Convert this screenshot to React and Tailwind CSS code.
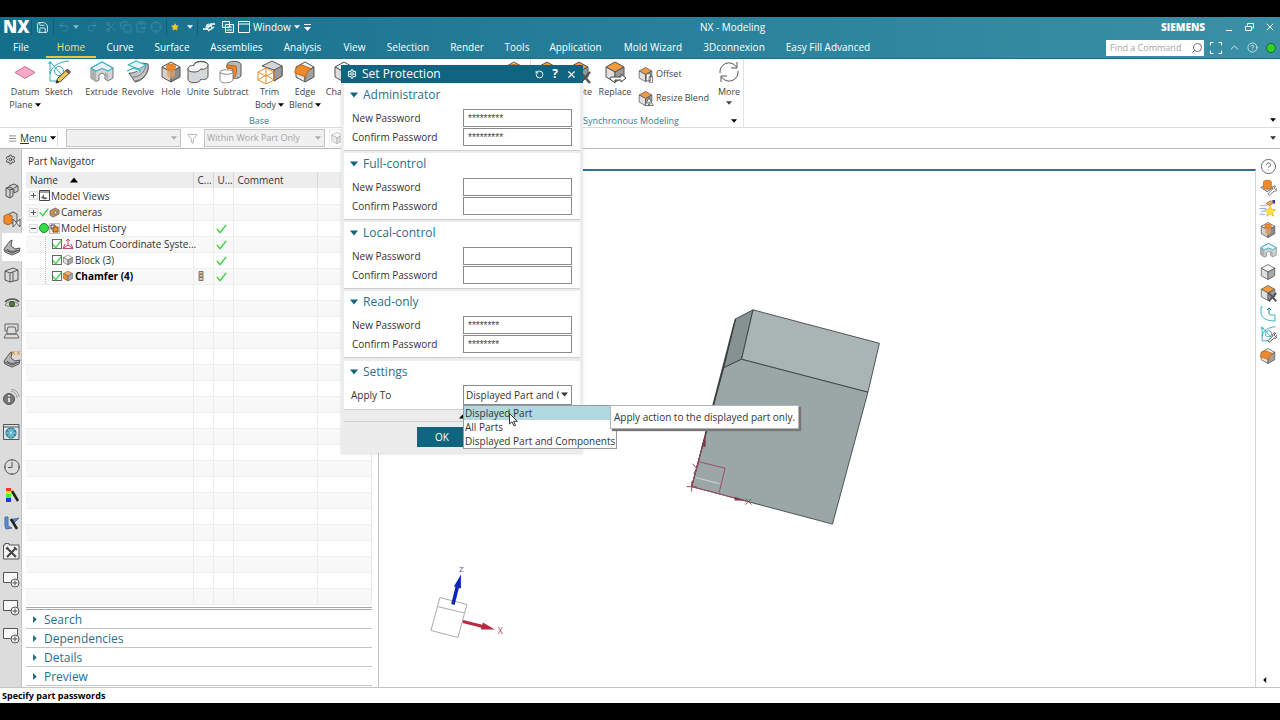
import { useState } from 'react';
import {
  Save, Undo2, Redo2, Scissors, Copy, ClipboardPaste, Crosshair, Star, Search,
  ChevronUp, CircleHelp, Settings, RotateCcw, X, Maximize, Menu, Clock, Filter
} from 'lucide-react';

const ORANGE = '#ee8a2b';

/* ---------- small shapes ---------- */

function Caret({ className = 'text-black', dir = 'down', size = 6 }) {
  const points = {
    down: '0,2 10,2 5,8',
    up: '0,8 10,8 5,2',
    right: '3,0 8,5 3,10',
    left: '7,0 2,5 7,10'
  };
  return (
    <svg width={size} height={size} viewBox="0 0 10 10" className={`shrink-0 ${className}`}>
      <polygon points={points[dir]} fill="currentColor" />
    </svg>
  );
}

function Cube({ size = 22, top = '#f4f4f4', left = '#dedede', right = '#a9a9a9', children }) {
  return (
    <svg width={size} height={size} viewBox="0 0 24 24" className="shrink-0" strokeLinejoin="round">
      <g stroke="#555" strokeWidth="1">
        <polygon points="12,2 21,7 12,12 3,7" fill={top} />
        <polygon points="3,7 12,12 12,22 3,17" fill={left} />
        <polygon points="21,7 12,12 12,22 21,17" fill={right} />
      </g>
      {children}
    </svg>
  );
}

function Check({ size = 11 }) {
  return (
    <svg width={size} height={size} viewBox="0 0 12 12" className="shrink-0">
      <path d="M1 6.5 4.5 10.5 11 2" fill="none" stroke="#35d43c" strokeWidth="1.5" />
    </svg>
  );
}

/* ---------- ribbon icons ---------- */

function DatumPlane() {
  return (
    <svg width="22" height="22" viewBox="0 0 24 24">
      <polygon points="12,6 23,12.500 12,19 1,12.500" fill="#f6a9c8" stroke="#c9668f" />
    </svg>
  );
}

function Pencil() {
  return (
    <g>
      <path d="M9 23 10.500 18.500 19 10.500 22 13.500 13.500 21.500Z" fill="#f2c94b" stroke="#444" />
      <path d="M19 10.500 20.500 9 23.500 12 22 13.500Z" fill="#b04a5a" stroke="#444" />
      <path d="M9 23 10 20 12 22Z" fill="#222" />
    </g>
  );
}

function Sketch() {
  return (
    <svg width="24" height="24" viewBox="0 0 24 24" fill="none">
      <path d="M3 1V21H11M1 3H5M3 14C5 6 11 2 22 1M3 2 16 16" stroke="#2fa9bd" />
      <circle cx="12" cy="11" r="4.500" stroke="#2fa9bd" />
      <Pencil />
    </svg>
  );
}

function Extrude({ size = 24 }) {
  return (
    <svg width={size} height={size} viewBox="0 0 24 24" strokeLinejoin="round">
      <path d="M1 8 12 2 23 8V18L18 21 15 19V15L12 13 9 15V20L6 21.500 1 18Z" fill="#d2d5d6" stroke="#777" />
      <path d="M15 12 18 14V21L15 19ZM1 8 6 11V21.500L1 18Z" fill="#adb1b2" />
      <path d="M1 8 12 2 23 8 18 11 12 8.500 6 11Z" fill="#eef4f5" stroke="#35b3c6" strokeWidth="1.300" />
    </svg>
  );
}

function Revolve() {
  return (
    <svg width="24" height="24" viewBox="0 0 24 24" strokeLinejoin="round">
      <path d="M3 13C9 14 15 9 16 3L22 4C24 12 17 21 9 22Z" fill="#c3c6c7" stroke="#555" />
      <path d="M7 17C14 17 19 12 20 5M9 21C16 20 21 15 22 8" fill="none" stroke="#777" />
      <path d="M2 5 10 1 20 5 13 9ZM1 11 8 8 15 11" fill="#eaf7f9" stroke="#35b3c6" strokeWidth="1.200" />
    </svg>
  );
}

function Hole({ size = 24 }) {
  return (
    <Cube size={size} left="#d8cfc6" right="#8d8a88">
      <path d="M8 8V16L12 19 16 16V8Z" fill="#d9a36f" opacity=".8" />
      <ellipse cx="12" cy="7" rx="4.500" ry="3" fill={ORANGE} stroke="#b9651a" strokeWidth=".7" />
    </Cube>
  );
}

function Unite() {
  return (
    <svg width="24" height="24" viewBox="0 0 24 24" fill="#d6d7d8" stroke="#555">
      <path d="M8 5C8 0 22 0 22 5V16C22 20 16 20 15 19 14 24 2 24 2 19V9C2 6 6 6 8 6Z" />
      <path d="M2 9C2 13 14 13 14.500 9 18 10 22 8 22 5 22 1 8 0 8 5.500 4 5 2 7 2 9Z" fill="#f5f5f5" />
    </svg>
  );
}

function Subtract() {
  return (
    <svg width="24" height="24" viewBox="0 0 24 24" stroke="#555">
      <path d="M8 5C8 0 22 0 22 5V15C22 18 17 19 14 18V9L8 8Z" fill="#b9bbbc" />
      <path d="M8 5 8 8 14 9V18C18 17 18 8 17 6Z" fill={ORANGE} stroke="#b9651a" />
      <path d="M1 12V20C1 24 14 24 14 19V12C14 9 1 9 1 12ZM1 12C1 15 14 15 14 12" fill="#fff" stroke="#888" />
    </svg>
  );
}

function TrimBody() {
  return (
    <svg width="26" height="24" viewBox="0 0 26 24" strokeLinejoin="round">
      <path d="M5 6 15 1 25 6V16L17 21V10Z" fill="#d4d4d4" stroke="#555" />
      <path d="M25 6 17 10V21L25 16Z" fill="#9c9c9c" stroke="#555" />
      <path d="M1 12 9 8 17 12V20L9 24 1 20ZM1 12 9 16 17 12M9 16V24M9 8V15L1 20M9 15 17 20" fill="none" stroke={ORANGE} />
    </svg>
  );
}

function EdgeBlend({ size = 24 }) {
  return (
    <Cube size={size} left="#e6e6e6" right="#a0a0a0">
      <path d="M2 11C3 7 6 5 9 5L19 9C15 10 13 13 13 17L2 13Z" fill={ORANGE} stroke="#b9651a" />
    </Cube>
  );
}

function MoveCube({ mark, size = 24 }) {
  return (
    <Cube size={size} top="#f39a3d" left="#e0e0e0" right="#9a9a9a">
      {mark === 'swap' && <path d="M8 17H18V14L23 18 18 22V20H12V23L7 19Z" fill="#fff" stroke="#444" />}
      {mark === 'delete' && <path d="M13 12 23 23M23 12 13 23" stroke="#555" strokeWidth="2.500" />}
      {mark === 'offset' && <path d="M13 11H19V21H13ZM17 15H22V23H17Z" fill="#fff" stroke="#444" />}
      {mark === 'resize' && <path d="M17 11 23 22H11ZM15 18H19L17 22Z" fill="#f4f4f4" stroke="#444" />}
    </Cube>
  );
}

function MoreIcon() {
  return (
    <svg width="22" height="22" viewBox="0 0 22 22" fill="none" stroke="#555">
      <path d="M2 12A9 9 0 0 1 18.500 6M19 1V7H13M20 10A9 9 0 0 1 3.500 16M3 21V15H9" />
    </svg>
  );
}

/* ---------- header ---------- */

const tabs = [
  ['File', 'w-[46px] pr-1'],
  ['Home', 'w-[50px]'],
  ['Curve', 'w-12'],
  ['Surface', 'w-14'],
  ['Assemblies', 'w-[73px]'],
  ['Analysis', 'w-[59px]'],
  ['View', 'w-[45px]'],
  ['Selection', 'w-[62px]'],
  ['Render', 'w-14'],
  ['Tools', 'w-11'],
  ['Application', 'w-[73px]'],
  ['Mold Wizard', 'w-[82px]'],
  ['3Dconnexion', 'w-20'],
  ['Easy Fill Advanced', 'w-[108px]']
];

function Divider() {
  return <span className="h-4 w-px bg-[#0f5f78]" />;
}

function Header() {
  return (
    <header className="bg-linear-to-r from-[#146f8a] via-[#27809a] to-[#3a90a5] text-white border-b border-[#1a6e86]">
      <div className="flex h-5 items-center">
        <div className="flex w-[700px] shrink-0 items-center gap-1 pl-[3px]">
          <span className="w-6 text-[17px] leading-5 font-extrabold">NX</span>
          <Divider />
          <Save size={13} strokeWidth={1.5} />
          <Divider />
          <span className="flex items-center gap-[3px] text-[#3b88a0]">
            <Undo2 size={12} />
            <Caret className="text-[#8dbccb]" />
            <Redo2 size={12} className="mx-1" />
            <Scissors size={12} />
            <Copy size={12} />
            <ClipboardPaste size={12} />
            <Crosshair size={12} />
          </span>
          <Divider />
          <Star size={8} fill="#f5c32c" stroke="#f5c32c" className="mr-1" />
          <Caret className="text-white" />
          <Divider />
          <svg width="14" height="12" viewBox="0 0 14 12" fill="none" stroke="#fff" className="mr-0.5">
            <path d="M1 8H5L9 3H13M4 5H9M6 10 12 6" strokeWidth="1.300" />
            <circle cx="7" cy="6" r="3" />
          </svg>
          <svg width="12" height="12" viewBox="0 0 12 12" fill="#2a7f98" stroke="#fff">
            <path d="M.5.5H7.500V6.500H.5ZM3.500 3.500H11.500V11.500H3.500ZM5 6H10M5 9H10" />
          </svg>
          <button type="button" className="flex items-center gap-[3px] text-[10px]">
            <svg width="12" height="12" viewBox="0 0 12 12" fill="none" stroke="#fff">
              <path d="M.5.5H11.500V11.500H.5ZM.5 3H11.500" />
            </svg>
            Window
            <Caret className="text-white" />
          </button>
          <svg width="7" height="7" viewBox="0 0 7 7" fill="#fff">
            <path d="M0 0H7V1H0ZM0 3H7L3.500 7Z" />
          </svg>
        </div>
        <h1 className="text-[10px]">NX - Modeling</h1>
        <div className="ml-auto flex items-center gap-2.5 pr-1">
          <span className="mr-2 text-[10px] font-extrabold">SIEMENS</span>
          <button type="button" aria-label="Minimize" className="flex size-3 items-end justify-center">
            <span className="mb-0.5 h-px w-1.5 bg-white" />
          </button>
          <button type="button" aria-label="Restore">
            <svg width="9" height="8" viewBox="0 0 9 8" fill="none" stroke="#fff">
              <path d="M2.500 3V.5H8.500V5H6.500M.5 3.500H6.500V7.500H.5Z" />
            </svg>
          </button>
          <button type="button" aria-label="Close"><X size={12} /></button>
        </div>
      </div>

      <div className="flex h-[21px] items-center">
        <nav className="flex h-[21px]">
          {tabs.map(([name, width]) => (
            <a
              key={name}
              href="#"
              className={`${width} flex items-center justify-center whitespace-nowrap border-b-2 pt-0.5 text-[10px] ${name === 'Home' ? 'border-[#e9c63f] text-[#f0df7a]' : 'border-transparent'}`}
            >
              {name}
            </a>
          ))}
        </nav>
        <div className="ml-auto flex items-center gap-1.5 pr-0.5">
          <div className="flex h-4 w-[98px] items-center bg-white pl-1 pr-px">
            <input
              type="text"
              aria-label="Find a Command"
              placeholder="Find a Command"
              className="w-0 flex-1 text-[9px] text-black outline-none placeholder:text-[#a5a5a5]"
            />
            <Search size={12} strokeWidth={1.5} stroke="#444" className="-scale-x-100" />
          </div>
          <svg width="12" height="12" viewBox="0 0 12 12" fill="none" stroke="#fff">
            <path d="M.5 3.500V.5H3.500M8.500.5H11.500V3.500M11.500 8.500V11.500H8.500M3.500 11.500H.5V8.500" />
          </svg>
          <ChevronUp size={13} strokeWidth={1.5} />
          <CircleHelp size={11} strokeWidth={1.5} />
          <span className="mx-0.5 size-[10px] rounded-full border border-[#1c6b2a] bg-[#2fd12a]" />
        </div>
      </div>
    </header>
  );
}

/* ---------- ribbon ---------- */

const baseTools = [
  { label: 'Datum', second: 'Plane', icon: <DatumPlane />, width: 'w-9' },
  { label: 'Sketch', icon: <Sketch />, width: 'w-8 mr-2' },
  { label: 'Extrude', icon: <Extrude />, width: 'w-[37px]' },
  { label: 'Revolve', icon: <Revolve />, width: 'w-9' },
  { label: 'Hole', icon: <Hole />, width: 'w-[30px]' },
  { label: 'Unite', icon: <Unite />, width: 'w-6' },
  { label: 'Subtract', icon: <Subtract />, width: 'w-[42px]' },
  { label: 'Trim', second: 'Body', icon: <TrimBody />, width: 'w-[35px]' },
  { label: 'Edge', second: 'Blend', icon: <EdgeBlend />, width: 'w-9' },
  { label: 'Chamfer', icon: <Cube size={24} />, width: 'w-[42px]' }
];

function RibbonButton({ label, second, icon, width }) {
  return (
    <button type="button" className={`${width} flex shrink-0 flex-col items-center text-[9px] leading-[13px]`}>
      <span className="mb-px flex h-6 items-center">{icon}</span>
      <span className="whitespace-nowrap">{label}</span>
      {second && (
        <span className="flex items-center gap-0.5">
          {second}
          <Caret size={6} />
        </span>
      )}
    </button>
  );
}

function Ribbon() {
  return (
    <div className="flex h-[69px] border-b border-[#dcdcdc] text-[#444]">
      <div className="flex w-[531px] shrink-0 flex-col border-r border-[#e2e2e2]">
        <div className="flex flex-1 items-start pl-[7px] pt-px">
          {baseTools.map((t) => <RibbonButton key={t.label} {...t} />)}
          <span className="ml-auto mr-1"><Hole /></span>
        </div>
        <div className="pr-3 text-center text-[9px] leading-[13px] text-[#2c7f95]">Base</div>
      </div>
      <div className="flex w-[213px] shrink-0 flex-col border-r border-[#e2e2e2]">
        <div className="flex flex-1 items-start pt-px">
          <span className="ml-1"><MoveCube /></span>
          <RibbonButton label="Delete" icon={<MoveCube mark="delete" />} width="w-[37px] ml-px" />
          <RibbonButton label="Replace" icon={<MoveCube mark="swap" />} width="w-9" />
          <div className="ml-1 flex w-[74px] flex-col gap-2 pt-1.5 text-[9px]">
            <button type="button" className="flex h-4 items-center gap-0.5 whitespace-nowrap">
              <MoveCube size={17} mark="offset" />Offset
            </button>
            <button type="button" className="flex h-4 items-center gap-0.5 whitespace-nowrap">
              <MoveCube size={17} mark="resize" />Resize Blend
            </button>
          </div>
          <button type="button" className="ml-1 flex w-7 flex-col items-center text-[9px] leading-[13px]">
            <span className="mb-px flex h-6 items-center"><MoreIcon /></span>
            More
            <Caret size={6} className="mt-0.5" />
          </button>
        </div>
        <div className="flex items-center text-[9px] leading-[13px] text-[#2c7f95]">
          <span className="flex-1 whitespace-nowrap text-center">Synchronous Modeling</span>
          <Caret size={6} className="mr-1.5 text-black" />
        </div>
      </div>
      <div className="flex flex-1 items-end justify-end pb-1 pr-1"><Caret size={6} /></div>
    </div>
  );
}

function SelectionBar() {
  return (
    <div className="flex h-[21px] items-center border-b border-[#b9b9b9] text-[10px] text-[#333]">
      <button type="button" className="flex h-4 w-[58px] items-center gap-[3px] border-r border-[#ddd] pl-2">
        <Menu size={9} strokeWidth={1.5} />
        <span><u>M</u>enu</span>
        <Caret size={6} />
      </button>
      <div className="relative ml-2">
        <select aria-label="Type filter" disabled className="block h-[18px] w-[115px] appearance-none border border-[#c4c4c4] bg-[#f0f0f0]" />
        <Caret className="absolute right-1 top-1.5 text-[#aaa]" />
      </div>
      <Filter size={11} stroke="#aaa" className="mx-1.5" />
      <div className="relative">
        <select aria-label="Selection scope" disabled className="block h-[18px] w-[121px] appearance-none border border-[#c4c4c4] bg-[#f0f0f0] pl-0.5 text-[9px] text-[#a5a5a5]">
          <option>Within Work Part Only</option>
        </select>
        <Caret className="absolute right-1 top-1.5 text-[#aaa]" />
      </div>
      <span className="ml-1 flex h-[18px] w-6 items-center border border-[#ddd] opacity-50">
        <Cube size={14} left="#ddd" right="#bbb" top="#eee" />
      </span>
      <Caret size={6} className="ml-auto mr-1" />
    </div>
  );
}

/* ---------- left resource bar ---------- */

function Gem({ active }) {
  return (
    <svg width="18" height="18" viewBox="0 0 18 18" strokeLinejoin="round">
      <path d="M1 11 7 3 9 2 8 8 12 11 17 10 16 14 9 17 2 14Z" fill="#b5b5b5" stroke="#555" />
      <path d="M4 11C6 14 12 14 14 12M2 12 9 15 16 12" fill="none" stroke="#555" />
      {!active && <path d="M9 1 12 5M12 1 9 5M14 1 17 5M17 1 14 5" stroke={ORANGE} />}
    </svg>
  );
}

function AddWindow() {
  return (
    <svg width="17" height="17" viewBox="0 0 17 17" fill="#f8f8f8" stroke="#555">
      <path d="M.5 1.500H14.500V11.500H.5Z" />
      <circle cx="12" cy="12" r="4" />
      <path d="M12 9.500V14.500M9.500 12H14.500" />
    </svg>
  );
}

const railIcons = [
  <svg key="assembly" width="16" height="16" viewBox="0 0 16 16" stroke="#555" fill="#d0d0d0" strokeLinejoin="round">
    <path d="M5 3 10 1 14 3V8L10 10V6L5 5Z" />
    <path d="M2 5 6 4 9 6V13L6 15 2 13ZM2 5 6 7 9 6M6 7V15" />
    <path d="M10 5 14 3" />
  </svg>,
  <svg key="constraint" width="18" height="17" viewBox="0 0 18 17" stroke="#555" strokeLinejoin="round">
    <path d="M6 3 10 1 14 3V10L9 12Z" fill="#cfcfcf" />
    <path d="M1 5 5 3 9 5V12L5 14 1 12Z" fill={ORANGE} stroke="#b9651a" />
    <path d="M10 8V16L17 8V16Z" fill="#fff" />
  </svg>,
  <Gem key="part" active />,
  <svg key="reuse" width="15" height="16" viewBox="0 0 15 16" stroke="#555" fill="#d8d8d8" strokeLinejoin="round">
    <path d="M1 4 9 1 14 3V13L6 15 1 13ZM1 4 6 6 14 3M6 6V15M9 5V14" />
  </svg>,
  <svg key="view" width="16" height="12" viewBox="0 0 16 12">
    <path d="M1 8C3 4 12 3 15 8 12 10 5 10 1 8Z" fill="#ddd" stroke="#777" />
    <circle cx="8" cy="7" r="2.500" fill="#4a8f2a" stroke="#333" />
    <path d="M1 5C5 1 12 1 15 5" fill="none" stroke="#555" strokeWidth="1.500" />
  </svg>,
  <svg key="machine" width="17" height="16" viewBox="0 0 17 16" stroke="#666" fill="none">
    <path d="M2 1H15V8H13L12 4H5L4 8H2ZM4 8V11H13V8M1 15 3 11H14L16 15Z" />
  </svg>,
  <Gem key="process" />,
  <svg key="info" width="17" height="17" viewBox="0 0 17 17">
    <circle cx="6" cy="10" r="5.500" fill="#777" stroke="#555" />
    <path d="M6 6V7.500M6 9V13" stroke="#fff" strokeWidth="1.500" />
    <path d="M8 2C12 3 14 6 14 9M8 0C14 1 16 5 16 8" fill="none" stroke="#999" />
  </svg>,
  <svg key="web" width="17" height="16" viewBox="0 0 17 16">
    <path d="M.5.5H16V15.500H.5ZM.5 3H16" fill="#d9e3e8" stroke="#555" />
    <circle cx="8" cy="9" r="5" fill="#3a9bb5" stroke="#216c84" />
    <path d="M8 4V14M3 9H13M5 5 11 13M11 5 5 13" stroke="#bfe6ef" strokeWidth=".7" />
  </svg>,
  <svg key="history" width="16" height="16" viewBox="0 0 16 16" fill="none" stroke="#555">
    <circle cx="8" cy="8" r="7.300" />
    <path d="M8 3V8.500H4M8 .5V2M8 14V15.500M14 8H15.500M.5 8H2" />
  </svg>,
  <svg key="color" width="16" height="16" viewBox="0 0 16 16">
    <path d="M2 1H7V4H2Z" fill="#f33" />
    <path d="M2 4H7V7H2Z" fill="#fd2" />
    <path d="M2 7H7V11H2Z" fill="#4e4" />
    <path d="M2 11H7V15H2Z" fill="#23e" />
    <path d="M8 4 14 14" stroke="#222" strokeWidth="2.500" />
  </svg>,
  <svg key="render" width="16" height="16" viewBox="0 0 16 16">
    <path d="M1 2H4V11L8 13 2 14 1 11ZM6 5 15 3 10 8Z" fill="#5a8fd0" stroke="#3f6fae" />
    <path d="M7 4 13 14" stroke="#222" strokeWidth="2.500" />
  </svg>,
  <svg key="tools" width="17" height="17" viewBox="0 0 17 17" fill="#f4f4f4" stroke="#555">
    <path d="M.5 2H2V.5H6V2H16V16H.5Z" />
    <path d="M4 5 13 14M13 5 4 14" stroke="#444" strokeWidth="2" />
    <path d="M3 6 5 4M11 4 14 7" stroke="#444" strokeWidth="1.500" />
  </svg>,
  <AddWindow key="w1" />,
  <AddWindow key="w2" />,
  <AddWindow key="w3" />
];

const railGap = { 7: 'mt-2.5', 8: 'mt-[7px]', 9: 'mt-[7px]' };

function LeftRail() {
  return (
    <aside className="flex w-[22px] shrink-0 flex-col border-r border-[#c2c2c2] bg-[#dcdcdc]">
      <div className="mb-2 flex h-5 items-center justify-center">
        <Settings size={11} stroke="#333" />
      </div>
      {railIcons.map((icon, i) => (
        <div
          key={icon.key}
          className={`flex h-7 shrink-0 items-center justify-center ${railGap[i] || ''} ${i === 2 ? '-mr-px ml-0.5 bg-white' : 'pl-0.5'}`}
        >
          {icon}
        </div>
      ))}
    </aside>
  );
}

/* ---------- part navigator ---------- */

function Expander({ open }) {
  return (
    <button type="button" aria-label={open ? 'Collapse' : 'Expand'} className="mr-px flex size-[9px] shrink-0 items-center justify-center border border-[#ddd] bg-[#f7f7f7]">
      <svg width="7" height="7" viewBox="0 0 7 7" stroke="#555">
        <path d={open ? 'M1 3.500H6' : 'M1 3.500H6M3.500 1V6'} />
      </svg>
    </button>
  );
}

function TreeCheck({ name }) {
  return (
    <span className="relative size-[10px] shrink-0">
      <input type="checkbox" defaultChecked aria-label={name} className="block size-[10px] appearance-none border border-[#666] bg-white" />
      <span className="pointer-events-none absolute inset-0"><Check size={10} /></span>
    </span>
  );
}

const nodes = [
  {
    name: 'Model Views', open: false, icon: (
      <svg width="11" height="11" viewBox="0 0 11 11" className="shrink-0">
        <path d="M.5.5H10.500V10.500H.5ZM.5 2H10.500" fill="#fff" stroke="#444" />
        <path d="M2 8 5 4V7L9 8 6 9.500Z" fill="#666" />
      </svg>
    )
  },
  {
    name: 'Cameras', open: false, lead: <Check size={10} />, icon: (
      <svg width="11" height="11" viewBox="0 0 11 11" className="shrink-0">
        <path d="M1 4 6 1 10 3V7L4 10 1 8Z" fill="#d88a4a" stroke="#777" />
        <circle cx="6.500" cy="5.500" r="1.500" fill="#eee" stroke="#666" />
      </svg>
    )
  },
  {
    name: 'Model History', open: true, used: true,
    lead: <span className="size-[10px] shrink-0 rounded-full border border-[#1d8a2a] bg-[#34dd48]" />,
    icon: (
      <svg width="11" height="11" viewBox="0 0 11 11" className="shrink-0">
        <path d="M.5.5H10.500V10.500H.5Z" fill="#eee" stroke="#bbb" />
        <path d="M2 2H6V6H2Z" fill="none" stroke="#444" />
        <path d="M4 4H9V9H4Z" fill={ORANGE} stroke="#8a4a18" />
      </svg>
    )
  },
  {
    name: 'Datum Coordinate Syste...', child: true, used: true, icon: (
      <svg width="12" height="12" viewBox="0 0 12 12" fill="none" stroke="#c2476f" className="shrink-0">
        <path d="M6 7V1M6 7 1 10.500M6 7 11 10.500M4 3 6 1 8 3M3 6 1 10.500H11L9 6" />
      </svg>
    )
  },
  { name: 'Block (3)', child: true, used: true, icon: <Cube size={12} /> },
  { name: 'Chamfer (4)', child: true, used: true, bold: true, marked: true, icon: <Cube size={12} left={ORANGE} top="#f4b272" /> }
];

function PartNavigator() {
  const rows = [...nodes, ...Array(20).fill(null)];
  const cell = 'border-r border-[#ececec]';

  return (
    <section className="flex w-[357px] shrink-0 flex-col border-r border-[#c0c0c0] pl-1 pr-1.5 pt-1 text-[#333]">
      <h2 className="h-[19px] pl-0.5 text-[10px] leading-4">Part Navigator</h2>
      <div className="border-b-[3px] border-double border-[#a8a8a8] pb-0.5">
        <table className="w-full table-fixed border-collapse text-left text-[10px] leading-3">
          <colgroup>
            <col className="w-[167px]" />
            <col className="w-5" />
            <col className="w-5" />
            <col className="w-[84px]" />
            <col />
          </colgroup>
          <thead>
            <tr className="h-4 bg-[#ededed]">
              <th className="border-r border-[#d6d6d6] py-0 pl-1 font-normal">
                <span className="flex items-center gap-3">Name <Caret dir="up" size={8} /></span>
              </th>
              <th className="border-r border-[#d6d6d6] p-0 pl-1 font-normal">C...</th>
              <th className="border-r border-[#d6d6d6] p-0 pl-1 font-normal">U...</th>
              <th className="border-r border-[#d6d6d6] p-0 pl-1 font-normal">Comment</th>
              <th className="p-0" />
            </tr>
          </thead>
          <tbody>
            {rows.map((n, i) => (
              <tr key={i} className={`h-4 border-b border-[#efefef] ${i % 2 ? 'bg-[#f8f8f8]' : 'bg-white'}`}>
                <td className={`${cell} p-0 pl-[3px]`}>
                  {n && (
                    <div className={`flex h-[15px] items-center whitespace-nowrap ${n.bold ? 'font-bold text-black' : ''}`}>
                      {n.child ? (
                        <>
                          <span className="ml-4 h-full w-[7px] shrink-0 border-l border-dotted border-[#bbb]" />
                          <TreeCheck name={n.name} />
                        </>
                      ) : <Expander open={n.open} />}
                      {n.lead}
                      {n.icon}
                      <span className="pl-px">{n.name}</span>
                    </div>
                  )}
                </td>
                <td className={`${cell} p-0`}>
                  {n?.marked && (
                    <svg width="7" height="10" viewBox="0 0 7 10" className="ml-1" fill="#f0c39a" stroke="#777">
                      <path d="M1 .5H5V3H1ZM1 3.500H5V6H1ZM1 6.500H5V9.500H1Z" />
                    </svg>
                  )}
                </td>
                <td className={`${cell} p-0 pl-0.5`}>{n?.used && <Check />}</td>
                <td className={`${cell} p-0`} />
                <td className={`${cell} p-0`} />
              </tr>
            ))}
          </tbody>
        </table>
      </div>
      {['Search', 'Dependencies', 'Details', 'Preview'].map((name) => (
        <button key={name} type="button" className="flex h-[19px] items-center gap-1.5 border-b border-[#c4c4c4] pl-[5px] pt-0.5 text-left text-[12px] text-[#1f7189]">
          <Caret dir="right" size={7} className="text-[#14647d]" />
          {name}
        </button>
      ))}
    </section>
  );
}

/* ---------- graphics window ---------- */

function Viewport() {
  return (
    <div className="flex min-w-0 flex-1 flex-col pt-5">
      <div className="flex-1 border-r border-t-2 border-r-[#d5d5d5] border-t-[#2b7587]">
        <svg className="h-[516px] w-full" viewBox="379 170 877 516" preserveAspectRatio="xMinYMin meet">
          <g stroke="#2f3636" strokeWidth=".8" strokeLinejoin="round">
            <polygon points="736,318 753.500,309 742,358.500 724,367" fill="#869292" />
            <polygon points="753.500,309 880,342.500 868.500,391.500 742,358.500" fill="#a9b5b5" />
            <polygon points="724,367 742,358.500 868.500,391.500 833,523.500 692,486" fill="#9ba7a7" />
            <polygon points="736,318 724,367 692,486 734,324" fill="#4b5353" />
          </g>
          <g fill="none" stroke="#a14b5e" strokeWidth="1">
            <path d="M687 486H697M692 481V491M692 486 749 501M692 486 706 434M699 461 725.500 467.500 719.500 492" />
            <path d="M746 498 752 504M752 498 746 504M693 463 697 468 699 463M697 468 694 473" />
            <path d="M696 477 720 483" stroke="#d0d8d8" />
          </g>
          <path d="M702 446 706 432 706 446ZM735 496 746 500 735 500Z" fill="#7c3a4a" />
          <g fill="none" stroke="#aaa">
            <path d="M440 597 467 604 458 637 431 630ZM437.500 606 464.500 612.500" />
          </g>
          <path d="M453 604 458 584" stroke="#1226b8" strokeWidth="3.500" />
          <polygon points="461,574 454,586 461,588" fill="#1226b8" />
          <path d="M463 621 483 626" stroke="#b82a40" strokeWidth="3" />
          <polygon points="495,629 483,622 481,629" fill="#b82a40" />
          <text x="459" y="571" fontSize="8" fill="#4a58c8">Z</text>
          <text x="498" y="634" fontSize="9" fill="#b84a5c">X</text>
        </svg>
      </div>
    </div>
  );
}

function Wrench() {
  return <path d="M11 21 18 14C17 11 20 9 22 10L20 13 22 15 24 13C25 16 22 18 20 17L13 23Z" fill="#fff" stroke="#444" />;
}

function RightRail() {
  const icons = [
    <CircleHelp key="help" size={17} strokeWidth={1.2} stroke="#555" />,
    <svg key="feature" width="17" height="17" viewBox="0 0 24 24">
      <path d="M1 12 10 8 19 12 10 18Z" fill="#ccc" stroke="#555" />
      <path d="M5 4V12C5 15 16 15 16 12V4C16 1 5 1 5 4Z" fill={ORANGE} stroke="#b9651a" />
      <Wrench />
    </svg>,
    <svg key="favorite" width="18" height="17" viewBox="0 0 24 24">
      <path d="M1 8H11M0 12H9M2 16H9M0 20H8" stroke="#8fb4e8" strokeWidth="1.500" />
      <path d="M9 5 16 1 20 4 14 8Z" fill="#e8a36b" stroke="#a86a3a" />
      <path d="M18 0H22V5H19Z" fill="#3a3a9a" />
      <path d="M15 8 17 13 23 13.500 18.500 17 20 23 15 19.500 10 23 11.500 17 7 13.500 13 13Z" fill="#ffe23a" stroke="#e0b51f" />
    </svg>,
    <Hole key="hole" size={18} />,
    <Extrude key="extrude" size={17} />,
    <Cube key="block" size={18} />,
    <MoveCube key="delete" mark="delete" size={18} />,
    <svg key="curve" width="16" height="16" viewBox="0 0 16 16" fill="none" stroke="#3ab8c6">
      <path d="M1 1V6C1 11 5 15 15 15V9H9M1 1H3" />
      <path d="M9 8V2M7 4 9 2 11 4" stroke="#2b8090" />
    </svg>,
    <svg key="sketch" width="17" height="17" viewBox="0 0 24 24" fill="none" stroke="#2fa9bd" strokeWidth="1.300">
      <path d="M3 1V21H11M1 3H5M3 14C5 6 11 2 22 1M3 2 16 16" />
      <circle cx="12" cy="11" r="4.500" />
      <Wrench />
    </svg>,
    <EdgeBlend key="blend" size={18} />
  ];
  return (
    <aside className="flex w-6 shrink-0 flex-col items-center pt-[7px]">
      {icons.map((icon) => (
        <div key={icon.key} className="flex h-[21px] w-full items-center justify-center">{icon}</div>
      ))}
      <Caret dir="left" size={6} className="mb-1 mr-1.5 mt-auto" />
    </aside>
  );
}

/* ---------- dialog ---------- */

const levels = [
  { name: 'Administrator', value: '*********' },
  { name: 'Full-control', value: '' },
  { name: 'Local-control', value: '' },
  { name: 'Read-only', value: '********' }
];

const applyOptions = ['Displayed Part', 'All Parts', 'Displayed Part and Components'];

function SectionTitle({ children }) {
  return (
    <h3 className="flex h-[22px] items-center gap-[5px] pl-1.5 text-[12px] text-[#1f7189]">
      <Caret size={8} className="text-[#14647d]" />
      {children}
    </h3>
  );
}

function PasswordRow({ id, label, value }) {
  return (
    <div className="flex h-[18px] items-center justify-between">
      <label htmlFor={id}>{label}</label>
      <input
        id={id}
        type="text"
        defaultValue={value}
        className="h-[18px] w-[109px] border border-[#8a8a8a] bg-white px-1 font-['Liberation_Sans',sans-serif] text-[10px] text-[#444] outline-none"
      />
    </div>
  );
}

function SetProtection() {
  const [applyTo, setApplyTo] = useState('Displayed Part and Components');

  return (
    <div role="dialog" aria-label="Set Protection" className="absolute left-[341px] top-[65px] w-[242px] bg-[#ececec] pb-1.5 text-[10px] text-[#333] shadow">
      <div className="flex h-[18px] items-center bg-[#0f6480] px-1.5 text-white">
        <Settings size={10} strokeWidth={2.5} />
        <h2 className="flex-1 pl-[5px] text-[12px]">Set Protection</h2>
        <div className="flex items-center gap-2">
          <button type="button" aria-label="Reset"><RotateCcw size={9} strokeWidth={2.5} /></button>
          <button type="button" className="text-[12px] leading-4 font-bold">?</button>
          <button type="button" aria-label="Close"><X size={11} strokeWidth={2.5} /></button>
        </div>
      </div>

      <div className="flex flex-col gap-[3px] px-[3px] pt-px">
        {levels.map(({ name, value }) => (
          <section key={name} className="bg-white pb-1 shadow-[0_1px_0_#cfcfcf]">
            <SectionTitle>{name}</SectionTitle>
            <div className="flex flex-col gap-px pl-2 pr-2 pt-[3px]">
              <PasswordRow id={`${name}-new`} label="New Password" value={value} />
              <PasswordRow id={`${name}-confirm`} label="Confirm Password" value={value} />
            </div>
          </section>
        ))}

        <section className="mt-px bg-white pb-1 shadow-[0_1px_0_#cfcfcf]">
          <SectionTitle>Settings</SectionTitle>
          <div className="flex items-center justify-between pl-[7px] pr-2 pt-0.5">
            <label htmlFor="apply-to">Apply To</label>
            <div className="relative">
              <select
                id="apply-to"
                value={applyTo}
                onChange={(e) => setApplyTo(e.target.value)}
                className="block h-5 w-[109px] appearance-none border border-[#8a8a8a] bg-white pl-0.5 pr-3 text-[10px] text-[#333]"
              >
                {applyOptions.map((o) => <option key={o}>{o}</option>)}
              </select>
              <Caret size={7} className="pointer-events-none absolute right-1 top-1.5" />

              <ul className="absolute left-0 top-5 z-10 w-[154px] border border-[#9a9a9a] bg-white">
                {applyOptions.map((o, i) => (
                  <li key={o} className={`h-[14px] whitespace-nowrap pl-px leading-[14px] ${i === 0 ? 'bg-[#b0d9e0]' : ''}`}>{o}</li>
                ))}
              </ul>
              <div role="tooltip" className="absolute left-[147px] top-5 z-10 flex h-6 items-center whitespace-nowrap border border-[#b5b5b5] bg-white px-[3px] shadow-[2px_2px_1px_#777]">
                Apply action to the displayed part only.
              </div>
              <svg width="9" height="14" viewBox="0 0 9 14" className="absolute left-[46px] top-7 z-20">
                <path d="M.5.5V11L3 8.800 5 13 6.500 12.300 4.700 8.300H8.300Z" fill="#fff" stroke="#333" />
              </svg>
            </div>
          </div>
        </section>

        <div className="flex h-2.5 items-center justify-center border-b border-[#cfcfcf]">
          <Caret dir="up" size={7} />
        </div>
        <div className="flex justify-center pt-0.5">
          <button type="button" className="mr-10 h-5 w-[50px] bg-[#0f6480] text-white">OK</button>
        </div>
      </div>
    </div>
  );
}

export default function App() {
  return (
    <div className="relative flex min-h-screen flex-col overflow-hidden border-y-[17px] border-black bg-white font-['Open_Sans','Noto_Sans',sans-serif]">
      <Header />
      <Ribbon />
      <SelectionBar />
      <main className="flex flex-1">
        <LeftRail />
        <PartNavigator />
        <Viewport />
        <RightRail />
      </main>
      <footer className="flex h-4 items-center border-t border-[#c4c4c4] pl-0.5 text-[9px] font-bold text-black">
        Specify part passwords
      </footer>
      <div className="absolute left-0 -top-[17px]">
        <SetProtection />
      </div>
    </div>
  );
}
